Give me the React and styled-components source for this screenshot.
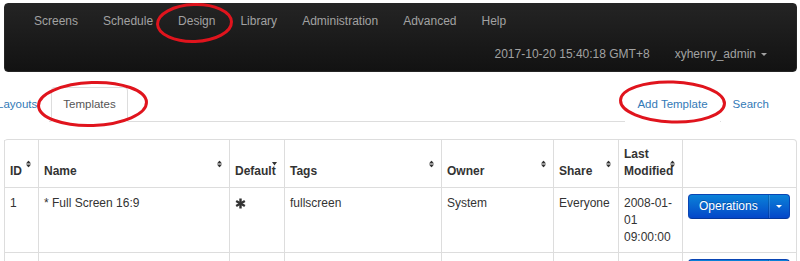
import React from "react";
import styled, { createGlobalStyle } from "styled-components";

const GlobalStyle = createGlobalStyle`
  html, body { margin: 0; padding: 0; background: #fff; }
  body {
    font-family: "Liberation Sans", Arial, sans-serif;
    font-size: 12px;
    color: #333;
    overflow: hidden;
  }
`;

const Page = styled.div`
  position: relative;
  width: 800px;
  height: 261px;
  overflow: hidden;
  box-sizing: border-box;
  padding: 3px 3px 0 4px;
`;

const Navbar = styled.header`
  height: 69px;
  box-sizing: border-box;
  border: 1px solid #252525;
  border-radius: 4px;
  background: linear-gradient(#242424, #121212);
  padding: 0 29px;
  display: flex;
  flex-direction: column;
`;

const NavRow = styled.nav`
  display: flex;
  box-sizing: border-box;
  height: ${(p) => p.$height}px;
  gap: ${(p) => p.$gap}px;
  justify-content: ${(p) => (p.$right ? "flex-end" : "flex-start")};
  padding-top: ${(p) => p.$top}px;
`;

const NavLink = styled.a`
  color: #a2a2a2;
  font-size: 12px;
  line-height: 20px;
  height: 20px;
  text-decoration: none;
  white-space: nowrap;
  display: inline-flex;
  align-items: center;
`;

const Caret = styled.span`
  display: inline-block;
  margin-left: ${(p) => (p.$flush ? 0 : 5)}px;
  width: 0;
  height: 0;
  border-left: 3px solid transparent;
  border-right: 3px solid transparent;
  border-top: 3px solid ${(p) => p.$color || "#a2a2a2"};
`;

const TabsBar = styled.div`
  display: flex;
  margin: 15px 16px 0 -19px;
  border-bottom: 1px solid #ddd;
`;

const TabGroup = styled.div`
  display: flex;
  gap: ${(p) => p.$gap}px;
  margin-left: ${(p) => (p.$push ? "auto" : "0")};
`;

const Tab = styled.a`
  display: block;
  padding: 8px 11px;
  line-height: 17px;
  font-size: 11.5px;
  margin-bottom: -1px;
  border: 1px solid transparent;
  border-radius: 4px 4px 0 0;
  text-decoration: none;
  white-space: nowrap;
  color: ${(p) => (p.$active ? "#555" : "#337ab7")};
  background: #fff;
  border-color: ${(p) => (p.$active ? "#ddd #ddd transparent" : "transparent")};
`;

const Table = styled.table`
  margin-top: 17px;
  width: 793px;
  table-layout: fixed;
  border-collapse: separate;
  border-spacing: 0;
  border: 1px solid #ddd;
  border-left: 0;
  border-radius: 4px;
`;

const Th = styled.th`
  position: relative;
  text-align: left;
  vertical-align: bottom;
  font-weight: bold;
  font-size: 12px;
  line-height: 17px;
  color: #333;
  padding: 6px 5px 7px;
  border-left: 1px solid #ddd;
`;

const Td = styled.td`
  vertical-align: top;
  font-size: 12px;
  line-height: 17px;
  color: #333;
  padding: 7px 5px 6px;
  border-left: 1px solid #ddd;
  border-top: 1px solid #ddd;
`;

const SortMark = styled.svg`
  position: absolute;
  right: 7px;
  top: 50%;
  transform: translateY(-50%);
`;

const Sort = ({ dir }) =>
  dir === "desc" ? (
    <SortMark width="5" height="4" viewBox="0 0 5 4">
      <polygon points="0,0 5,0 2.5,3.5" fill="#333" />
    </SortMark>
  ) : (
    <SortMark width="5" height="7" viewBox="0 0 5 7">
      <polygon points="2.5,0 5,3 0,3" fill="#333" />
      <polygon points="0,4 5,4 2.5,7" fill="#333" />
    </SortMark>
  );

const AsteriskIcon = styled.svg`
  display: block;
  margin-top: 3px;
`;

const Asterisk = () => (
  <AsteriskIcon width="11" height="11" viewBox="0 0 11 11">
    <g fill="#333">
      <rect x="4.3" y="0.5" width="2.4" height="10" />
      <rect x="4.3" y="0.5" width="2.4" height="10" transform="rotate(60 5.5 5.5)" />
      <rect x="4.3" y="0.5" width="2.4" height="10" transform="rotate(120 5.5 5.5)" />
    </g>
  </AsteriskIcon>
);

const SplitButton = styled.div`
  display: inline-flex;
  margin-top: -1px;
  border: 1px solid #0a45b4;
  border-bottom-color: #06389a;
  border-radius: 4px;
  overflow: hidden;
  background: linear-gradient(#0a82d8, #0447c9);
`;

const ButtonMain = styled.span`
  padding: 3px 10px;
  line-height: 17px;
  font-size: 12px;
  color: #fff;
  text-shadow: 0 -1px 0 rgba(0, 0, 0, 0.25);
`;

const ButtonCaret = styled.span`
  width: 20px;
  display: flex;
  align-items: center;
  justify-content: center;
  border-left: 1px solid rgba(0, 0, 0, 0.15);
  box-shadow: inset 1px 0 0 rgba(255, 255, 255, 0.15);
`;

const Operations = () => (
  <SplitButton>
    <ButtonMain>Operations</ButtonMain>
    <ButtonCaret>
      <Caret $color="#fff" $flush />
    </ButtonCaret>
  </SplitButton>
);

const Annotations = styled.svg`
  position: absolute;
  left: 0;
  top: 0;
  pointer-events: none;
`;

const columns = [
  { label: "ID", width: 34 },
  { label: "Name", width: 191 },
  { label: "Default", width: 55, dir: "desc" },
  { label: "Tags", width: 157 },
  { label: "Owner", width: 112 },
  { label: "Share", width: 65 },
  { label: "Last Modified", width: 64 },
  { label: "", width: 114, noSort: true },
];

const rows = [
  {
    id: "1",
    name: "* Full Screen 16:9",
    isDefault: true,
    tags: "fullscreen",
    owner: "System",
    share: "Everyone",
    modified: "2008-01-01 09:00:00",
  },
  {
    id: "",
    name: "",
    isDefault: false,
    tags: "",
    owner: "",
    share: "",
    modified: "",
  },
];

export default function App() {
  return (
    <>
      <GlobalStyle />
      <Page>
        <Navbar>
          <NavRow $gap={25} $top={7} $height={34}>
            {["Screens", "Schedule", "Design", "Library", "Administration", "Advanced", "Help"].map((n) => (
              <NavLink key={n} href="#">
                {n}
              </NavLink>
            ))}
          </NavRow>
          <NavRow $gap={25} $top={6} $height={26} $right>
            <NavLink as="span">2017-10-20 15:40:18 GMT+8</NavLink>
            <NavLink href="#">
              xyhenry_admin
              <Caret />
            </NavLink>
          </NavRow>
        </Navbar>

        <TabsBar>
          <TabGroup $gap={2}>
            <Tab href="#">Layouts</Tab>
            <Tab href="#" $active>
              Templates
            </Tab>
          </TabGroup>
          <TabGroup $gap={1} $push>
            <Tab href="#">Add Template</Tab>
            <Tab href="#">Search</Tab>
          </TabGroup>
        </TabsBar>

        <Table>
          <colgroup>
            {columns.map((c, i) => (
              <col key={i} style={{ width: c.width }} />
            ))}
          </colgroup>
          <thead>
            <tr>
              {columns.map((c, i) => (
                <Th key={i}>
                  {c.label}
                  {!c.noSort && <Sort dir={c.dir} />}
                </Th>
              ))}
            </tr>
          </thead>
          <tbody>
            {rows.map((r, i) => (
              <tr key={i}>
                <Td>{r.id}</Td>
                <Td>{r.name}</Td>
                <Td>{r.isDefault && <Asterisk />}</Td>
                <Td>{r.tags}</Td>
                <Td>{r.owner}</Td>
                <Td>{r.share}</Td>
                <Td>{r.modified}</Td>
                <Td>
                  <Operations />
                </Td>
              </tr>
            ))}
          </tbody>
        </Table>

        <Annotations width="800" height="261" viewBox="0 0 800 261">
          <g fill="none" stroke="#e0141d" strokeWidth="3">
            <ellipse cx="194.5" cy="23" rx="37" ry="18.5" transform="rotate(-2 194.5 23)" />
            <ellipse cx="92.5" cy="104" rx="54" ry="21.5" transform="rotate(-2 92.5 104)" />
            <ellipse cx="672.5" cy="102" rx="52" ry="20" transform="rotate(2 672.5 102)" />
          </g>
        </Annotations>
      </Page>
    </>
  );
}
